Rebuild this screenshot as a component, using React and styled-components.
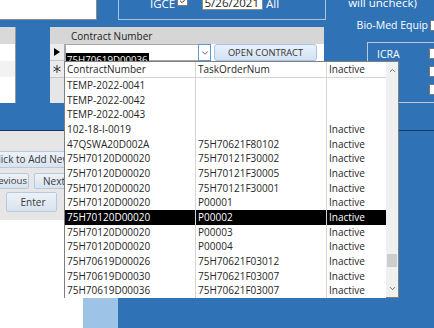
import React from 'react'
import styled, { createGlobalStyle } from 'styled-components'
import { ChevronDown, ChevronUp, Check } from 'lucide-react'

const GlobalStyle = createGlobalStyle`
    html, body {
        margin:0;
        padding:0;
    }
    body {
        background:#2f72b5;
        font-family: "Open Sans", "Noto Sans", sans-serif;
    }
`

const rows = [
    ['TEMP-2022-0041', '', ''],
    ['TEMP-2022-0042', '', ''],
    ['TEMP-2022-0043', '', ''],
    ['102-18-I-0019', '', 'Inactive'],
    ['47QSWA20D002A', '75H70621F80102', 'Inactive'],
    ['75H70120D00020', '75H70121F30002', 'Inactive'],
    ['75H70120D00020', '75H70121F30005', 'Inactive'],
    ['75H70120D00020', '75H70121F30001', 'Inactive'],
    ['75H70120D00020', 'P00001', 'Inactive'],
    ['75H70120D00020', 'P00002', 'Inactive'],
    ['75H70120D00020', 'P00003', 'Inactive'],
    ['75H70120D00020', 'P00004', 'Inactive'],
    ['75H70619D00026', '75H70621F03012', 'Inactive'],
    ['75H70619D00030', '75H70621F03007', 'Inactive'],
    ['75H70619D00036', '75H70621F03007', 'Inactive'],
]
const selectedRow = 9

const CheckBox = ({ checked, mb }) => (
    <Box $mb={mb}>{checked && <Check size={8} strokeWidth={3} color="#333" />}</Box>
)

const App = () => {
    return (
        <>
            <GlobalStyle />
            <Page>
                <Header>
                    <HeaderMain>
                        <TopRow>
                            <SearchBox />
                            <IgceBox>
                                <IgceInner>
                                    <TopLabel $w={27}>IGCE</TopLabel>
                                    <CheckBox checked mb={4} />
                                    <DateField>5/26/2021</DateField>
                                    <TopLabel>All</TopLabel>
                                </IgceInner>
                            </IgceBox>
                        </TopRow>
                        <FormRow>
                            <SubformStub>
                                <StubCell $tone="head" $h={17} />
                                <StubCell $h={17} />
                                <StubCell $tone="alt" $h={16} />
                            </SubformStub>
                            <ContractPanel>
                                <PanelHeader>Contract Number</PanelHeader>
                                <RecordRow>
                                    <Selector>
                                        <svg width="6" height="8" viewBox="0 0 6 8"><polygon points="0,0 6,4 0,8" fill="#000" /></svg>
                                    </Selector>
                                    <Combo>
                                        <ComboText><Selected>75H70619D00036</Selected></ComboText>
                                        <ComboButton><ChevronDown size={10} strokeWidth={2} color="#444" /></ComboButton>
                                    </Combo>
                                    <OpenButton>OPEN CONTRACT</OpenButton>
                                </RecordRow>
                                <RecordRow>
                                    <Selector>
                                        <svg width="8" height="8" viewBox="0 0 8 8" stroke="#333" strokeWidth="1">
                                            <line x1="4" y1="0" x2="4" y2="8" />
                                            <line x1="0.5" y1="2" x2="7.5" y2="6" />
                                            <line x1="0.5" y1="6" x2="7.5" y2="2" />
                                        </svg>
                                    </Selector>
                                </RecordRow>
                            </ContractPanel>
                        </FormRow>
                    </HeaderMain>
                    <HeaderSide>
                        <SideNote>will uncheck)</SideNote>
                        <BioRow>
                            <SideLabel>Bio-Med Equip</SideLabel>
                            <CheckBox />
                        </BioRow>
                        <IcraBox>
                            <IcraRow><SideLabel>ICRA</SideLabel><CheckBox /></IcraRow>
                            <IcraRow><CheckBox /></IcraRow>
                            <IcraRow><CheckBox /></IcraRow>
                        </IcraBox>
                    </HeaderSide>
                </Header>
                <Detail>
                    <DetailLeft>
                        <ButtonPanel>
                            <NavButton $w={90} $h={17} $ml={-15} $align="left">Click to Add New</NavButton>
                            <ButtonRow>
                                <NavButton $w={51} $h={16} $ml={-22} $align="right" $pr={1} $fs={9.6}>Previous</NavButton>
                                <NavButton $w={42} $h={16} $ml={5} $align="left" $pl={8}>Next</NavButton>
                            </ButtonRow>
                            <NavButton $w={51} $h={20} $ml={6} $mt={3}>Enter</NavButton>
                        </ButtonPanel>
                        <WhiteFill />
                    </DetailLeft>
                    <LightStrip />
                </Detail>

                <DropList>
                    <ListBody>
                        <ListRow $head>
                            <Cell>ContractNumber</Cell>
                            <Cell>TaskOrderNum</Cell>
                            <Cell>Inactive</Cell>
                        </ListRow>
                        {rows.map((r, i) => (
                            <ListRow key={i} $selected={i === selectedRow}>
                                <Cell>{r[0]}</Cell>
                                <Cell>{r[1]}</Cell>
                                <Cell>{r[2]}</Cell>
                            </ListRow>
                        ))}
                    </ListBody>
                    <ScrollBar>
                        <ScrollArrow><ChevronUp size={9} strokeWidth={2.2} color="#555" /></ScrollArrow>
                        <Track>
                            <Thumb style={{ marginTop: 175 }} />
                        </Track>
                        <ScrollArrow><ChevronDown size={9} strokeWidth={2.2} color="#555" /></ScrollArrow>
                    </ScrollBar>
                </DropList>
            </Page>
        </>
    )
}

export default App

const Page = styled.div`
    position:relative;
    width:434px;
    height:328px;
    overflow:hidden;
    background:#2f72b5;
    display:flex;
    flex-direction:column;
    font-family: "Open Sans", "Noto Sans", sans-serif;
    color:#262626;
`

const Header = styled.div`
    display:flex;
    height:130px;
    flex-shrink:0;
    border-bottom:1px solid #1b3658;
`

const HeaderMain = styled.div`
    width:326px;
    display:flex;
    flex-direction:column;
`

const TopRow = styled.div`
    display:flex;
    align-items:flex-start;
    height:27px;
`

const SearchBox = styled.div`
    width:96px;
    height:19px;
    background:#fff;
    border-right:1px solid #8c8c8c;
    border-bottom:1px solid #8c8c8c;
`

const IgceBox = styled.div`
    margin-left:21px;
    width:206px;
    height:19px;
    border:1px solid #a9c3e0;
    border-top:none;
    overflow:hidden;
`

const IgceInner = styled.div`
    display:flex;
    align-items:flex-end;
    height:20px;
    margin-top:-10px;
    padding-left:31px;
`

const TopLabel = styled.span`
    width:${p => p.$w ? `${p.$w}px` : 'auto'};
    color:#fff;
    font-size:11.5px;
    line-height:12px;
    white-space:nowrap;
`

const Box = styled.div`
    width:9px;
    height:9px;
    flex-shrink:0;
    margin-bottom:${p => p.$mb || 0}px;
    background:#fff;
    border:1px solid #7a7a7a;
    display:flex;
    align-items:center;
    justify-content:center;
`

const DateField = styled.div`
    margin-left:14px;
    margin-right:3px;
    width:56px;
    padding:5px 3px 0 0;
    background:#fff;
    border:1px solid #8c8c8c;
    font-size:11.5px;
    line-height:12px;
    text-align:right;
    color:#222;
`

const FormRow = styled.div`
    display:flex;
    height:76px;
`

const SubformStub = styled.div`
    width:15px;
    background:#fff;
    border-right:1px solid #9a9a9a;
    display:flex;
    flex-direction:column;
`

const StubCell = styled.div`
    height:${p => p.$h}px;
    background:${p => p.$tone === 'head' ? '#d9d9d9' : p.$tone === 'alt' ? '#f2f2f2' : '#fff'};
`

const ContractPanel = styled.div`
    margin-left:34px;
    width:274px;
    background:#e6e6e6;
    display:flex;
    flex-direction:column;
`

const PanelHeader = styled.div`
    height:17px;
    padding-left:21px;
    background:#d6d6d6;
    font-size:10px;
    line-height:18px;
    color:#222;
`

const RecordRow = styled.div`
    display:flex;
    height:17px;
    background:#fff;
`

const Selector = styled.div`
    width:14px;
    flex-shrink:0;
    background:#ececec;
    border-right:1px solid #a8a8a8;
    border-bottom:1px solid #c8c8c8;
    display:flex;
    align-items:center;
    justify-content:center;
`

const Combo = styled.div`
    width:146px;
    height:17px;
    box-sizing:border-box;
    display:flex;
    border:1px solid #a8a8a8;
    background:#fff;
`

const ComboText = styled.div`
    flex:1;
    padding:1px 0 0 0;
`

const Selected = styled.span`
    display:inline-block;
    background:#000;
    color:#fff;
    font-size:9.7px;
    line-height:13px;
    padding:0 1px;
`

const ComboButton = styled.div`
    width:13px;
    box-sizing:border-box;
    border:1px solid #5b97d4;
    display:flex;
    align-items:center;
    justify-content:center;
    margin:-1px -1px -1px 0;
    height:17px;
`

const OpenButton = styled.div`
    margin-left:3px;
    width:103px;
    height:17px;
    box-sizing:border-box;
    border:1px solid #a7c4e4;
    border-radius:3px;
    background:linear-gradient(#e9f1fa, #d3e2f3);
    font-size:9.3px;
    line-height:15px;
    text-align:center;
    color:#333;
`

const HeaderSide = styled.div`
    width:108px;
    display:flex;
    flex-direction:column;
`

const SideNote = styled.div`
    margin-top:-3px;
    padding-left:5px;
    text-align:center;
    color:#fff;
    font-size:11.5px;
    line-height:12px;
    white-space:nowrap;
`

const SideLabel = styled.span`
    color:#fff;
    font-size:10.5px;
    line-height:12px;
    white-space:nowrap;
`

const BioRow = styled.div`
    display:flex;
    align-items:center;
    justify-content:flex-end;
    gap:2px;
    height:12px;
    margin:10px -7px 0 0;
`

const IcraBox = styled.div`
    margin:11px 0 0 41px;
    height:61px;
    box-sizing:border-box;
    border:1px solid #b9c9db;
    border-right:none;
    padding:5px 0 0 9px;
    display:flex;
    flex-direction:column;
    gap:7px;
`

const IcraRow = styled.div`
    display:flex;
    align-items:center;
    justify-content:space-between;
    height:11px;
    margin-right:-6px;
    & > div:only-child { margin-left:auto; }
`

const Detail = styled.div`
    display:flex;
    flex:1;
`

const DetailLeft = styled.div`
    width:83px;
    display:flex;
    flex-direction:column;
`

const ButtonPanel = styled.div`
    height:89px;
    padding-top:20px;
    box-sizing:border-box;
    background:#e6e6e6;
    display:flex;
    flex-direction:column;
`

const ButtonRow = styled.div`
    display:flex;
    margin-top:5px;
`

const NavButton = styled.div`
    width:${p => p.$w}px;
    height:${p => p.$h}px;
    margin-left:${p => p.$ml}px;
    margin-top:${p => p.$mt || 0}px;
    flex-shrink:0;
    box-sizing:border-box;
    border:1px solid #b9c9dc;
    border-radius:2px;
    background:linear-gradient(#edf2f8, #d8e3ef);
    font-size:${p => p.$fs || 10}px;
    line-height:${p => p.$h - 2}px;
    color:#3a3a3a;
    white-space:nowrap;
    text-align:${p => p.$align || 'center'};
    padding:0 ${p => p.$pr ?? 3}px 0 ${p => p.$pl || 6}px;
`

const WhiteFill = styled.div`
    flex:1;
    background:#fff;
`

const LightStrip = styled.div`
    width:35px;
    background:#9dc3e6;
`

const DropList = styled.div`
    position:absolute;
    left:64px;
    top:61px;
    width:335px;
    height:237px;
    box-sizing:border-box;
    border:1px solid #7f7f7f;
    background:#fff;
    display:flex;
    z-index:5;
`

const ListBody = styled.div`
    flex:1;
    display:flex;
    flex-direction:column;
`

const ListRow = styled.div`
    display:grid;
    grid-template-columns:131px 131px 1fr;
    height:${p => p.$head ? '16px' : '14.667px'};
    box-sizing:border-box;
    border-bottom:${p => p.$head ? '1px solid #d4d4d4' : 'none'};
    background:${p => p.$selected ? '#000' : '#fff'};
    color:${p => p.$selected ? '#fff' : '#262626'};
`

const Cell = styled.div`
    padding-left:2px;
    font-size:10px;
    line-height:15px;
    white-space:nowrap;
    overflow:hidden;
    border-right:1px solid #d6d6d6;
    &:last-child { border-right:none; }
`

const ScrollBar = styled.div`
    width:12px;
    background:#f0f0f0;
    display:flex;
    flex-direction:column;
`

const ScrollArrow = styled.div`
    height:17px;
    display:flex;
    align-items:center;
    justify-content:center;
`

const Track = styled.div`
    flex:1;
    padding:0 1px;
`

const Thumb = styled.div`
    height:13px;
    background:#cdcdcd;
`
